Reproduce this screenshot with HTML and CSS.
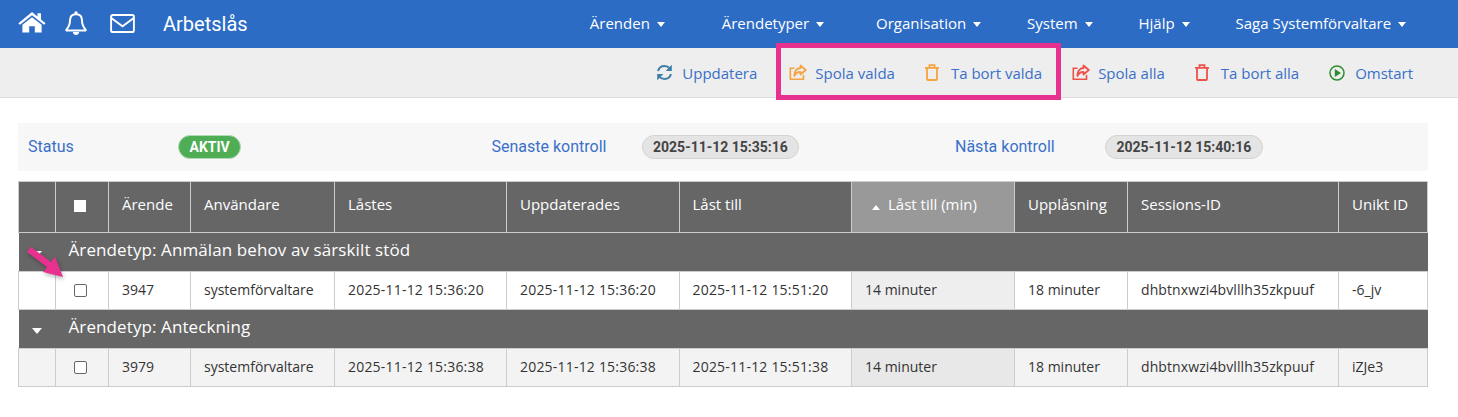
FILE: index.html
```html
<!DOCTYPE html>
<html lang="sv">

<head>
    <meta charset="UTF-8" />
    <title>Arbetslås</title>
    <link rel="stylesheet" href="styles.css">
</head>

<body>

    <header class="topbar">
        <div class="topbar-left">
            <svg class="top-icon home-icon" viewBox="0 0 28 24" width="28" height="22" preserveAspectRatio="none">
                <path fill="#fff" d="M14 1 L19.5 6 V2.5 H23 V9.2 L27.6 13.3 L26 15 L14 4.6 L2 15 L0.4 13.3 Z" />
                <path fill="#fff" d="M14 6.8 L23.6 15 V23.5 H16.8 V16.5 H11.2 V23.5 H4.4 V15 Z" />
            </svg>
            <svg class="top-icon bell-icon" viewBox="0 0 22 24" width="22" height="24">
                <path fill="none" stroke="#fff" stroke-width="2" stroke-linejoin="round" d="M11 3.2 C6.8 3.2 5 6.2 5 9.6 C5 14.6 3.4 16.4 1.4 18.6 V19.6 H20.6 V18.6 C18.6 16.4 17 14.6 17 9.6 C17 6.2 15.2 3.2 11 3.2 Z" />
                <circle fill="#fff" cx="11" cy="2" r="1.7" />
                <path fill="#fff" d="M7.8 21 H14.2 C14 23 12.6 24 11 24 C9.4 24 8 23 7.8 21 Z" />
            </svg>
            <svg class="top-icon mail-icon" viewBox="0 0 26 20" width="25" height="19">
                <rect fill="none" stroke="#fff" stroke-width="2" x="1" y="1" width="24" height="18" rx="2" />
                <path fill="none" stroke="#fff" stroke-width="2" d="M1.5 4.5 L13 13 L24.5 4.5" />
            </svg>
            <span class="app-title">Arbetslås</span>
        </div>
        <nav class="topmenu">
            <a class="menu-item menu-arenden">Ärenden <i class="caret"></i></a>
            <a class="menu-item menu-typer">Ärendetyper <i class="caret"></i></a>
            <a class="menu-item">Organisation <i class="caret"></i></a>
            <a class="menu-item">System <i class="caret"></i></a>
            <a class="menu-item">Hjälp <i class="caret"></i></a>
            <a class="menu-item">Saga Systemförvaltare <i class="caret"></i></a>
        </nav>
    </header>

    <div class="toolbar">
        <a class="tool tool-refresh">
            <svg viewBox="0 0 17 17" width="17" height="17">
                <path fill="none" stroke="#3f7fa8" stroke-width="2" d="M2 7 C3 3.5 5.5 2 8.5 2 C10.8 2 12.6 3 14 4.6" />
                <path fill="#3f7fa8" d="M15.8 0.8 V7 H9.6 Z" />
                <path fill="none" stroke="#3f7fa8" stroke-width="2" d="M15 10 C14 13.5 11.5 15 8.5 15 C6.2 15 4.4 14 3 12.4" />
                <path fill="#3f7fa8" d="M1.2 16.2 V10 H7.4 Z" />
            </svg>
            Uppdatera
        </a>
        <a class="tool">
            <svg class="share" viewBox="0 0 18 17" width="18" height="17">
                <path fill="none" stroke="#f5a341" stroke-width="1.6" d="M14.5 11 V15.2 H1.3 V4.2 H5.5" />
                <path fill="none" stroke="#f5a341" stroke-width="1.8" stroke-linejoin="round" d="M11.5 1.5 L16.8 6 L11.5 10.5 V8 C8.5 8 6.5 9 5.5 12 C5 7.5 7.5 4.3 11.5 4 Z" />
            </svg>
            Spola valda
        </a>
        <a class="tool">
            <svg class="trash" viewBox="0 0 14 17" width="14" height="17">
                <path fill="none" stroke="#f5a341" stroke-width="1.8" d="M2 4.5 V15 Q2 16 3 16 H11 Q12 16 12 15 V4.5 M0 3.8 H14 M4.5 3.5 V1.2 H9.5 V3.5" />
            </svg>
            Ta bort valda
        </a>
        <a class="tool">
            <svg class="share" viewBox="0 0 18 17" width="18" height="17">
                <path fill="none" stroke="#f0504a" stroke-width="1.6" d="M14.5 11 V15.2 H1.3 V4.2 H5.5" />
                <path fill="none" stroke="#f0504a" stroke-width="1.8" stroke-linejoin="round" d="M11.5 1.5 L16.8 6 L11.5 10.5 V8 C8.5 8 6.5 9 5.5 12 C5 7.5 7.5 4.3 11.5 4 Z" />
            </svg>
            Spola alla
        </a>
        <a class="tool">
            <svg class="trash" viewBox="0 0 14 17" width="14" height="17">
                <path fill="none" stroke="#f0504a" stroke-width="1.8" d="M2 4.5 V15 Q2 16 3 16 H11 Q12 16 12 15 V4.5 M0 3.8 H14 M4.5 3.5 V1.2 H9.5 V3.5" />
            </svg>
            Ta bort alla
        </a>
        <a class="tool">
            <svg viewBox="0 0 16 16" width="16" height="16">
                <circle fill="none" stroke="#2e8b2e" stroke-width="1.5" cx="8" cy="8" r="7" />
                <path fill="#2e8b2e" d="M5.8 4 L12 8 L5.8 12 Z" />
            </svg>
            Omstart
        </a>
    </div>

    <main class="content">
        <section class="status-panel">
            <div class="status-group">
                <span class="status-label">Status</span>
                <span class="pill pill-green">AKTIV</span>
            </div>
            <div class="status-group">
                <span class="status-label">Senaste kontroll</span>
                <span class="pill">2025-11-12 15:35:16</span>
            </div>
            <div class="status-group">
                <span class="status-label">Nästa kontroll</span>
                <span class="pill">2025-11-12 15:40:16</span>
            </div>
        </section>

        <table class="lock-table">
            <colgroup>
                <col class="c-exp"><col class="c-chk"><col class="c-id"><col class="c-user">
                <col class="c-time"><col class="c-time2"><col class="c-time2"><col class="c-min">
                <col class="c-open"><col class="c-sess"><col class="c-uid">
            </colgroup>
            <thead>
                <tr>
                    <th></th>
                    <th class="chk-cell"><span class="head-box"></span></th>
                    <th>Ärende</th>
                    <th>Användare</th>
                    <th>Låstes</th>
                    <th>Uppdaterades</th>
                    <th>Låst till</th>
                    <th class="sorted"><i class="caret-up"></i>Låst till (min)</th>
                    <th>Upplåsning</th>
                    <th>Sessions-ID</th>
                    <th>Unikt ID</th>
                </tr>
            </thead>
            <tbody>
                <tr class="group-row">
                    <td class="exp-cell"><i class="caret caret-group"></i></td>
                    <td colspan="10">Ärendetyp: Anmälan behov av särskilt stöd</td>
                </tr>
                <tr class="data-row">
                    <td></td>
                    <td class="chk-cell"><span class="row-box"></span></td>
                    <td>3947</td>
                    <td>systemförvaltare</td>
                    <td class="date-cell">2025-11-12 15:36:20</td>
                    <td class="date-cell">2025-11-12 15:36:20</td>
                    <td class="date-cell">2025-11-12 15:51:20</td>
                    <td class="sorted-cell">14 minuter</td>
                    <td>18 minuter</td>
                    <td class="sess-cell">dhbtnxwzi4bvlllh35zkpuuf</td>
                    <td>-6_jv</td>
                </tr>
                <tr class="group-row">
                    <td class="exp-cell"><i class="caret caret-group"></i></td>
                    <td colspan="10">Ärendetyp: Anteckning</td>
                </tr>
                <tr class="data-row alt">
                    <td></td>
                    <td class="chk-cell"><span class="row-box"></span></td>
                    <td>3979</td>
                    <td>systemförvaltare</td>
                    <td class="date-cell">2025-11-12 15:36:38</td>
                    <td class="date-cell">2025-11-12 15:36:38</td>
                    <td class="date-cell">2025-11-12 15:51:38</td>
                    <td class="sorted-cell">14 minuter</td>
                    <td>18 minuter</td>
                    <td class="sess-cell">dhbtnxwzi4bvlllh35zkpuuf</td>
                    <td>iZJe3</td>
                </tr>
            </tbody>
        </table>
    </main>

    <!-- annotations on top of the screenshot -->
    <div class="mark-box"></div>
    <svg class="mark-arrow" viewBox="0 0 37 31" width="37" height="31">
        <path fill="#e8308f" d="M0 5 L4 0 L24 15 L28 10 L36 30 L16 25 L20 20 Z" />
    </svg>

</body>

</html>
```

FILE: styles.css
```css
body {
    margin: 0;
    background-color: #fff;
    font-family: "Open Sans", "Noto Sans", sans-serif;
    font-size: 14px;
    color: #333;
    position: relative;
}

.topbar {
    height: 48px;
    background-color: #2d6cc5;
    color: #fff;
    display: flex;
    align-items: center;
    justify-content: space-between;
    padding: 0 52px 0 18px;
}

.topbar-left {
    display: flex;
    align-items: center;
}

.top-icon {
    display: block;
}

.home-icon {
    margin-bottom: 5px;
}

.bell-icon {
    margin-left: 19px;
    margin-bottom: 2px;
}

.mail-icon {
    margin-left: 23px;
    margin-bottom: 1px;
}

.app-title {
    margin-left: 28px;
    font-family: Roboto, sans-serif;
    font-size: 20px;
}

.topmenu {
    display: flex;
    align-items: center;
    gap: 46px;
}

.menu-item {
    font-size: 15px;
    white-space: nowrap;
    padding-bottom: 2px;
}

.menu-arenden {
    margin-right: 11px;
}

.menu-typer {
    margin-right: 6px;
}

.caret {
    display: inline-block;
    margin-left: 3px;
    border-left: 4px solid transparent;
    border-right: 4px solid transparent;
    border-top: 5px solid #fff;
    vertical-align: 2px;
}

.toolbar {
    height: 50px;
    box-sizing: border-box;
    background-color: #eee;
    border-bottom: 1px solid #ddd;
    display: flex;
    align-items: center;
    justify-content: flex-end;
    gap: 30px;
    padding-right: 45px;
}

.tool {
    display: flex;
    align-items: center;
    gap: 10px;
    color: #3a70c9;
    font-size: 15px;
    white-space: nowrap;
}

.tool-refresh {
    gap: 9px;
    margin-right: 2px;
}

.tool .share {
    margin-right: -2px;
}

.tool .trash {
    margin-right: 2px;
}

.content {
    padding: 25px 30px 0 18px;
}

.status-panel {
    height: 48px;
    box-sizing: border-box;
    background-color: #f7f7f7;
    padding-left: 10px;
    display: grid;
    grid-template-columns: 463.5px 463.5px 1fr;
    align-items: center;
}

.status-group {
    display: flex;
    align-items: center;
}

.status-label {
    width: 150px;
    font-family: Roboto, sans-serif;
    font-size: 16px;
    color: #3a70c9;
    padding-bottom: 2px;
}

.pill {
    font-family: Roboto, sans-serif;
    font-weight: 700;
    font-size: 14px;
    color: #444;
    background-color: #e4e4e4;
    border: 1px solid #d4d4d4;
    border-radius: 12px;
    padding: 3px 10.5px;
    line-height: 16px;
}

.pill-green {
    color: #fff;
    background-color: #4fae55;
    border-color: #b5d8b7;
}

.lock-table {
    width: 1409px;
    margin-top: 10px;
    table-layout: fixed;
    border-collapse: collapse;
    font-size: 14px;
}

.c-exp { width: 37px; }
.c-chk { width: 53px; }
.c-id { width: 82px; }
.c-user { width: 144px; }
.c-time { width: 172px; }
.c-time2 { width: 172.5px; }
.c-min { width: 163px; }
.c-open { width: 113px; }
.c-sess { width: 211px; }
.c-uid { width: 89px; }

.lock-table th {
    height: 51px;
    box-sizing: border-box;
    background-color: #666;
    color: #fff;
    font-size: 15px;
    font-weight: 400;
    text-align: left;
    padding: 0 13px 7px;
    border: 1px solid #ccc;
    white-space: nowrap;
}

.lock-table th.sorted {
    background-color: #999;
    padding-left: 20px;
}

.caret-up {
    display: inline-block;
    margin-right: 8px;
    border-left: 4px solid transparent;
    border-right: 4px solid transparent;
    border-bottom: 5px solid #fff;
    vertical-align: 0;
}

.head-box {
    display: block;
    width: 12px;
    height: 12px;
    background-color: #fff;
    margin: 0 auto;
}

.lock-table th.chk-cell {
    padding: 0 4px 3px 0;
}

.lock-table td.chk-cell {
    padding: 0 4px 0 0;
}

.date-cell {
    letter-spacing: 0.2px;
}

.sess-cell {
    letter-spacing: 0.1px;
}

.group-row td {
    height: 39px;
    box-sizing: border-box;
    background-color: #666;
    color: #fff;
    font-size: 17px;
    letter-spacing: 0.1px;
    padding: 0 0 6px 13px;
}

.group-row td.exp-cell {
    padding: 0;
}

.caret-group {
    display: block;
    margin: 4px auto 0;
    border-left: 5px solid transparent;
    border-right: 5px solid transparent;
    border-top: 6px solid #fff;
    width: 0;
}

.data-row td {
    height: 38px;
    box-sizing: border-box;
    padding: 0 13px 2px;
    border: 1px solid #ccc;
    white-space: nowrap;
    background-color: #fff;
}

.data-row.alt td {
    background-color: #f3f3f3;
}

.data-row td.sorted-cell {
    background-color: #eee;
}

.data-row.alt td.sorted-cell {
    background-color: #e8e8e8;
}

.row-box {
    display: block;
    box-sizing: border-box;
    width: 13px;
    height: 13px;
    margin: 0 auto;
    background-color: #fff;
    border: 1px solid #666;
    border-radius: 2px;
}

.mark-box {
    position: absolute;
    left: 776px;
    top: 43px;
    width: 285px;
    height: 57px;
    box-sizing: border-box;
    border: 5px solid #e8308f;
}

.mark-arrow {
    position: absolute;
    left: 27px;
    top: 247px;
    filter: drop-shadow(1px 2px 2px rgba(0, 0, 0, 0.3));
}
```
